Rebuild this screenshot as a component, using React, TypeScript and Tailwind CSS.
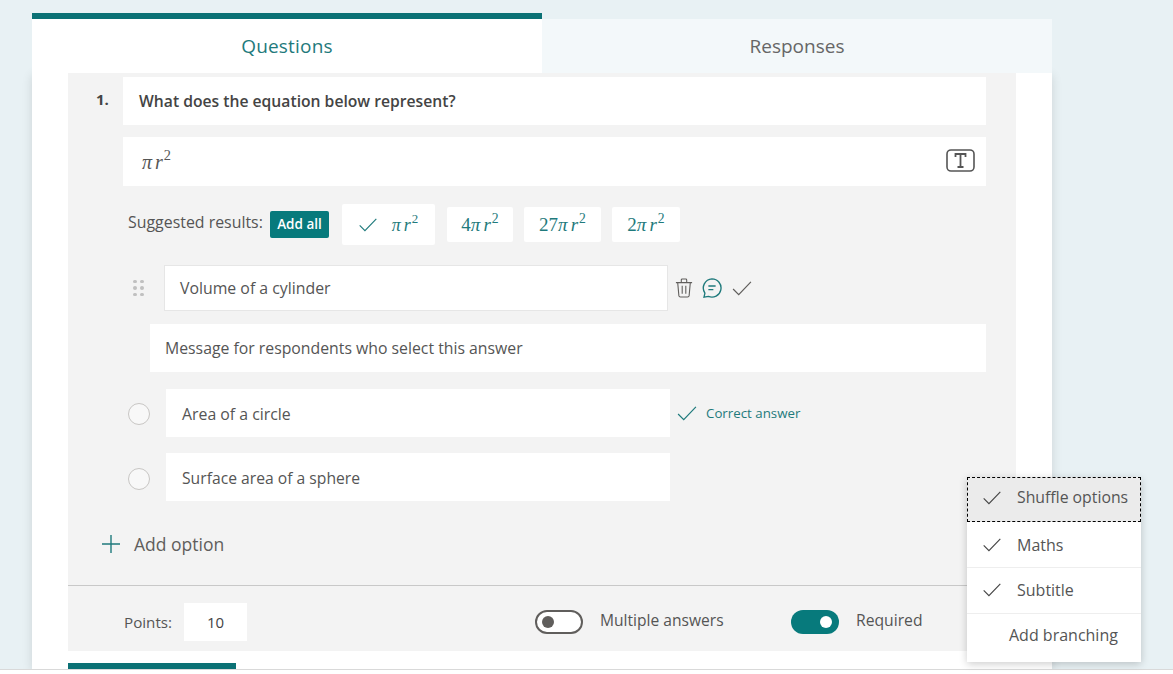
const font = { fontFamily: '"Open Sans", "Noto Sans", sans-serif' };

function Check({ className }: { className: string }) {
  return (
    <svg viewBox="0 0 20 16" className={className} fill="none" stroke="currentColor" strokeWidth="1.3">
      <path d="M0.5 8.5 L6.5 14.5 L19.5 1" />
    </svg>
  );
}

function Formula({ pre, className }: { pre?: string; className: string }) {
  return (
    <span className={`whitespace-nowrap font-['Liberation_Serif',serif] ${className}`}>
      {pre}
      <i>π</i>
      <i className="ml-[3px]">r</i>
      <sup className="ml-[1px] text-[0.72em] top-[-0.6em]">2</sup>
    </span>
  );
}

function Toggle({ on }: { on?: boolean }) {
  return on ? (
    <span className="flex w-[48px] h-[24px] rounded-full bg-[#077a7c] items-center justify-end pr-[7px]">
      <span className="w-[12px] h-[12px] rounded-full bg-white" />
    </span>
  ) : (
    <span className="flex w-[48px] h-[24px] rounded-full border-2 border-[#605e5c] bg-white items-center pl-[5px]">
      <span className="w-[12px] h-[12px] rounded-full bg-[#605e5c]" />
    </span>
  );
}

function Radio({ className }: { className: string }) {
  return <span className={`w-[22px] h-[22px] rounded-full border border-[#c8c6c4] bg-[#f8f8f8] shrink-0 ${className}`} />;
}

const menuItems = [
  { label: "Shuffle options", checked: true, focus: true, pad: "pb-[4px]" },
  { label: "Maths", checked: true, pad: "" },
  { label: "Subtitle", checked: true, pad: "pb-[2px]" },
  { label: "Add branching", pad: "pb-[4px]" },
];

export default function App() {
  return (
    <div style={font} className="relative w-[1173px] h-[674px] overflow-hidden bg-[#e8f1f4] text-[#444] flex flex-col">
      <div className="relative z-10 flex ml-[32px] w-[1020px] h-[73px] pt-[13px] shrink-0">
        <div className="w-[510px] border-t-[6px] border-[#0b7175] bg-white flex items-center justify-center pt-[1px] text-[19px] text-[#1f7a7c]">
          <span className="tracking-[0.2px]">Questions</span>
        </div>
        <div className="w-[510px] mt-[6px] bg-[#f3f8fa] flex items-center justify-center pt-[1px] text-[19px] text-[#666]">
          Responses
        </div>
      </div>

      <div className="ml-[32px] w-[1020px] h-[596px] shrink-0 bg-white shadow-[0_2px_10px_rgba(0,0,0,0.12)] px-[36px]">
        <div className="h-[578px] bg-[#f3f3f3] flex flex-col">
          <div className="flex items-center h-[48px] mt-[4px] pl-[28px] pr-[30px]">
            <span className="w-[27px] text-[15px] font-bold text-[#444] -mt-[3px]">1.</span>
            <div className="flex-1 h-full bg-white flex items-center pl-[16px] pt-[2px] text-[15.7px] font-semibold text-[#444]">
              What does the equation below represent?
            </div>
          </div>

          <div className="flex items-center justify-between h-[49px] mt-[12px] ml-[55px] mr-[30px] bg-white pl-[19px] pr-[11px]">
            <Formula className="text-[20px] leading-none text-[#555]" />
            <svg viewBox="0 0 29 23" className="w-[29px] h-[23px] -mt-[3px] text-[#555]" fill="none" stroke="currentColor">
              <rect x="1" y="1" width="27" height="21" rx="4" strokeWidth="1.6" />
              <path d="M9.5 8 V5 H19.5 V8 M14.5 5 V18 M11.5 18 H17.5" strokeWidth="1.8" />
            </svg>
          </div>

          <div className="flex items-center h-[41px] mt-[18px] ml-[60px]">
            <span className="text-[15.9px] text-[#555] w-[142px] -mt-[4px] whitespace-nowrap">Suggested results:</span>
            <span className="flex items-center justify-center w-[59px] h-[27px] rounded-[2px] bg-[#077a7c] text-white text-[13.5px] font-semibold">
              Add all
            </span>
            <div className="flex items-center justify-center gap-[15px] w-[93px] h-[41px] ml-[13px] bg-white rounded-[2px] text-[#1f7a7c]">
              <Check className="w-[18px] h-[14px]" />
              <Formula className="text-[18px] leading-none" />
            </div>
            <div className="flex items-center justify-center w-[66px] h-[35px] ml-[12px] bg-white rounded-[2px] text-[#1f7a7c]">
              <Formula pre="4" className="text-[19px] leading-none" />
            </div>
            <div className="flex items-center justify-center w-[77px] h-[35px] ml-[11px] bg-white rounded-[2px] text-[#1f7a7c]">
              <Formula pre="27" className="text-[19px] leading-none" />
            </div>
            <div className="flex items-center justify-center w-[68px] h-[35px] ml-[11px] bg-white rounded-[2px] text-[#1f7a7c]">
              <Formula pre="2" className="text-[19px] leading-none" />
            </div>
          </div>

          <div className="flex items-center h-[46px] mt-[20px] ml-[65px]">
            <div className="grid grid-cols-2 gap-x-[4px] gap-y-[3px] w-[10px] shrink-0">
              {[0, 1, 2, 3, 4, 5].map((i) => (
                <span key={i} className="w-[3.5px] h-[3.5px] rounded-full bg-[#c0c0c0]" />
              ))}
            </div>
            <div className="w-[504px] h-full ml-[21px] bg-white border border-[#e6e6e6] flex items-center pl-[15px] pt-[2px] text-[15.85px] text-[#555]">
              Volume of a cylinder
            </div>
            <svg viewBox="0 0 20 22" className="w-[18px] h-[20px] ml-[7px] text-[#605e5c]" fill="none" stroke="currentColor" strokeWidth="1.2">
              <path d="M1 5 H19 M7 5 V2 Q7 1 8 1 H12 Q13 1 13 2 V5 M3 5 L4.3 19.5 Q4.5 21 6 21 H14 Q15.5 21 15.7 19.5 L17 5 M8 8.5 V17.5 M12 8.5 V17.5" />
            </svg>
            <svg viewBox="0 0 22 22" className="w-[20px] h-[20px] ml-[9px] text-[#1f7a7c]" fill="none" stroke="currentColor" strokeWidth="1.5">
              <path d="M11 1 A10 10 0 1 1 7 20.2 L2.2 21 L3.2 16.6 A10 10 0 0 1 11 1 Z" />
              <path d="M7 8.8 H15 M7 12.8 H12.5" />
            </svg>
            <Check className="w-[20px] h-[15px] ml-[10px] text-[#605e5c]" />
          </div>

          <div className="flex items-center h-[48px] mt-[13px] ml-[82px] mr-[30px] bg-white pl-[15px] pt-[2px] text-[15.8px] text-[#555]">
            Message for respondents who select this answer
          </div>

          <div className="flex items-center h-[48px] mt-[17px] ml-[60px]">
            <Radio className="mt-[2px]" />
            <div className="w-[504px] h-full ml-[16px] bg-white flex items-center pl-[16px] pt-[4px] text-[15.85px] text-[#555]">
              Area of a circle
            </div>
            <Check className="w-[20px] h-[15px] ml-[7px] text-[#1f7a7c]" />
            <span className="ml-[9px] pt-[2px] text-[13.3px] text-[#1f7a7c]">Correct answer</span>
          </div>

          <div className="flex items-center h-[48px] mt-[16px] ml-[60px]">
            <Radio className="mt-[4px]" />
            <div className="w-[504px] h-full ml-[16px] bg-white flex items-center pl-[16px] pt-[4px] text-[15.7px] text-[#555]">
              Surface area of a sphere
            </div>
          </div>

          <div className="flex items-center mt-[28px] h-[30px] ml-[34px]">
            <svg viewBox="0 0 18 18" className="w-[18px] h-[18px] text-[#1f7a7c]" fill="none" stroke="currentColor" strokeWidth="1.4">
              <path d="M0 9 H18 M9 0 V18" />
            </svg>
            <span className="ml-[14px] text-[17.5px] text-[#605e5c]">Add option</span>
          </div>

          <div className="mt-[26px] border-t border-[#c8c8c8]" />

          <div className="flex items-center h-[38px] mt-[17px] ml-[56px]">
            <span className="w-[60px] text-[15.2px] text-[#555]">Points:</span>
            <span className="w-[63px] h-full bg-white flex items-center pl-[23px] text-[15px] text-[#444]">10</span>
            <div className="ml-[288px]">
              <Toggle />
            </div>
            <span className="ml-[17px] w-[191px] text-[15.6px] text-[#555] -mt-[2px]">Multiple answers</span>
            <Toggle on />
            <span className="ml-[17px] text-[15.7px] text-[#555] -mt-[2px]">Required</span>
          </div>
        </div>
        <div className="mt-[12px] w-[168px] h-[6px] bg-[#0b7175]" />
      </div>

      <div className="h-[5px] bg-white border-t border-[#d9d9d9] shrink-0 relative" />

      <div className="absolute z-20 left-[967px] top-[477px] w-[174px] h-[185px] bg-white shadow-[0_2px_8px_rgba(0,0,0,0.2)] text-[16px] text-[#555]">
        {menuItems.map((item) => (
          <div
            key={item.label}
            className={
              item.focus
                ? `flex items-center h-[45px] bg-[#ebebeb] border border-dashed border-black ${item.pad}`
                : `flex items-center h-[46px] border-b border-[#eeeeee] last:border-b-0 ${item.pad}`
            }
          >
            {item.checked ? (
              <>
                <Check className={item.focus ? "ml-[14px] w-[20px] h-[14px] text-[#444]" : "ml-[15px] w-[20px] h-[14px] text-[#444]"} />
                <span className={item.focus ? "ml-[15px] text-[15.8px] whitespace-nowrap" : "ml-[15px] whitespace-nowrap"}>{item.label}</span>
              </>
            ) : (
              <span className="ml-[42px] whitespace-nowrap">{item.label}</span>
            )}
          </div>
        ))}
      </div>
    </div>
  );
}
